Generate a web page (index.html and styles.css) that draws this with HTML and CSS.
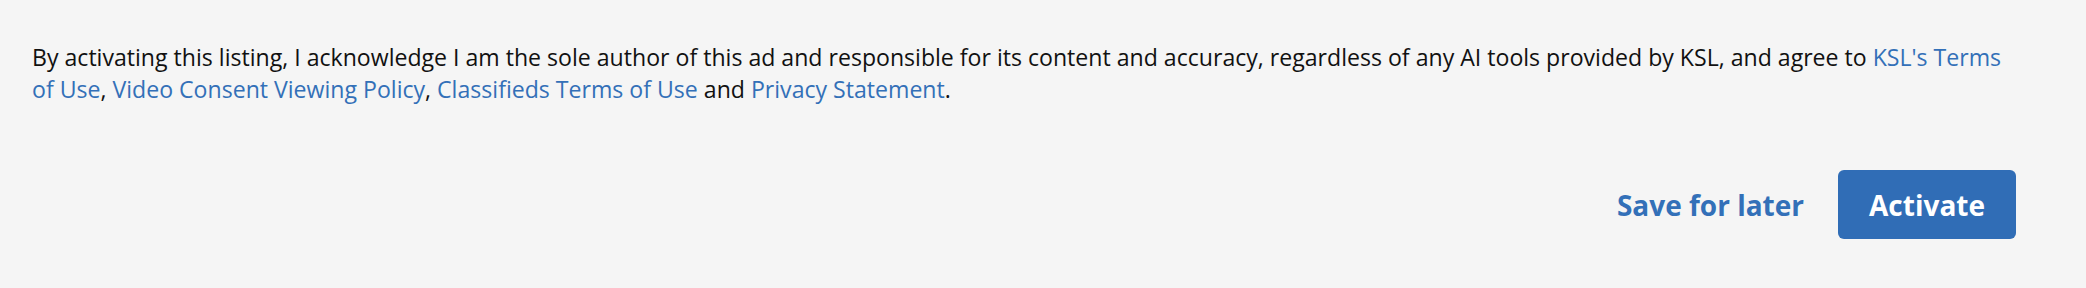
FILE: index.html
```html
<!DOCTYPE html>
<html lang="en">
<head>
<meta charset="utf-8">
<title>Activate listing</title>
<link rel="stylesheet" href="styles.css">
</head>
<body>
<div class="panel">
  <p class="terms">By activating this listing, I acknowledge I am the sole author of this ad and responsible for its content and accuracy, regardless of any AI tools provided by KSL, and agree to <a href="#">KSL's Terms of Use</a>, <a href="#">Video Consent Viewing Policy</a>, <a href="#">Classifieds Terms of Use</a> and <a href="#">Privacy Statement</a>.</p>
  <div class="actions">
    <button class="btn-link" type="button">Save for later</button>
    <button class="btn-primary" type="button">Activate</button>
  </div>
</div>
</body>
</html>
```
FILE: styles.css
```css
html, body {
  margin: 0;
  padding: 0;
  background: #f5f5f5;
}
body {
  font-family: "Open Sans", "Noto Sans", sans-serif;
  color: #111;
}
.panel {
  width: 1984px;
  padding: 42px 0 0 32px;
}
.terms {
  margin: 0;
  font-size: 23.1px;
  line-height: 31.5px;
  color: #111;
}
.terms a {
  color: #3370b8;
  text-decoration: none;
}
.actions {
  display: flex;
  justify-content: flex-end;
  align-items: center;
  gap: 34px;
  margin-top: 65px;
}
.btn-link, .btn-primary {
  font-family: "Open Sans", "Noto Sans", sans-serif;
  font-weight: 700;
  font-size: 28px;
  border: 0;
  cursor: pointer;
}
.btn-link {
  background: none;
  color: #3370b8;
  padding: 0;
}
.btn-primary {
  background: #306db6;
  color: #fff;
  height: 69px;
  padding: 0 31px;
  border-radius: 6px;
}
```
